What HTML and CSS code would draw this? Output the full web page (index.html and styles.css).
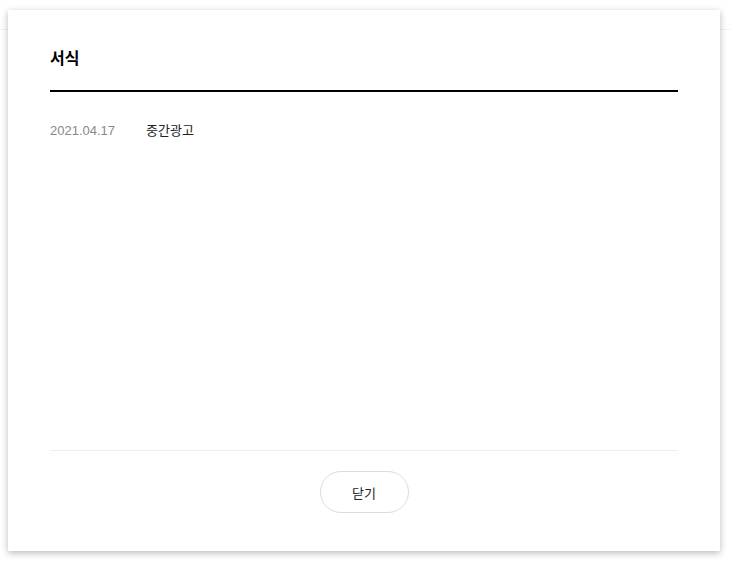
FILE: index.html
```html
<!DOCTYPE html>
<html lang="ko">
<head>
<meta charset="utf-8">
<link rel="stylesheet" href="styles.css">
</head>
<body>
<div class="page-header"></div>
<div class="modal">
  <div class="modal-head">
    <h2 class="modal-title">서식</h2>
  </div>
  <div class="modal-body">
    <ul class="doc-list">
      <li class="doc-item"><span class="doc-date">2021.04.17</span><span class="doc-name">중간광고</span></li>
    </ul>
  </div>
  <div class="modal-foot">
    <button class="btn-close" type="button">닫기</button>
  </div>
</div>
</body>
</html>
```
FILE: styles.css
```css
html, body {
  margin: 0;
  padding: 0;
  background: #fff;
  font-family: "Liberation Sans", "Noto Sans CJK KR", sans-serif;
  color: #222;
}
.page-header {
  height: 29px;
  border-bottom: 1px solid #f3f3f3;
}
.modal {
  position: absolute;
  left: 8px;
  top: 10px;
  width: 712px;
  height: 541px;
  box-sizing: border-box;
  background: #fff;
  box-shadow: 0 2px 7px rgba(0, 0, 0, 0.28);
  padding: 0 42px;
  display: flex;
  flex-direction: column;
}
.modal-head {
  padding: 37px 0 19px;
  border-bottom: 2px solid #000;
}
.modal-title {
  margin: 0;
  font-size: 16px;
  line-height: 24px;
  font-weight: bold;
  color: #000;
}
.modal-body {
  flex: 1;
  border-bottom: 1px solid #eee;
}
.doc-list {
  list-style: none;
  margin: 29px 0 0;
  padding: 0;
}
.doc-item {
  display: flex;
  font-size: 13px;
  line-height: 20px;
}
.doc-date {
  width: 96px;
  color: #888;
}
.doc-name {
  color: #222;
}
.modal-foot {
  display: flex;
  justify-content: center;
  padding: 20px 0 38px;
}
.btn-close {
  width: 89px;
  height: 42px;
  border: 1px solid #ddd;
  border-radius: 21px;
  background: #fff;
  font-family: "Liberation Sans", "Noto Sans CJK KR", sans-serif;
  font-size: 13px;
  color: #222;
  padding: 0;
}
```
